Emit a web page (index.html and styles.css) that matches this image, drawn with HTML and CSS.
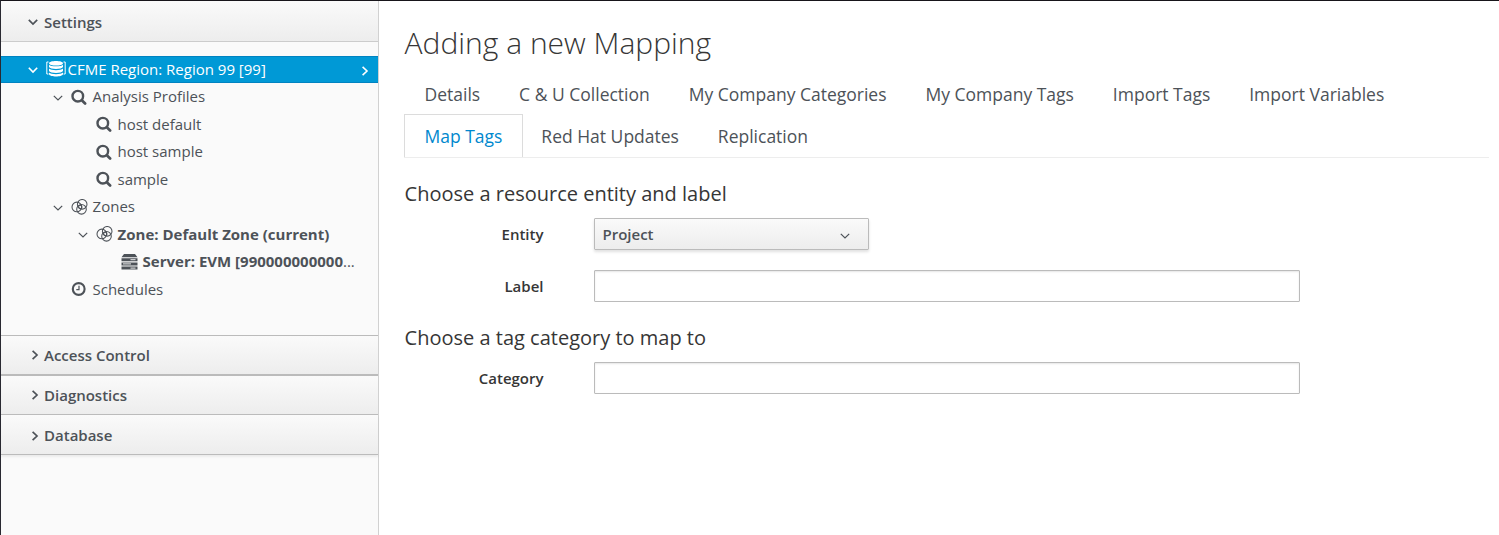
FILE: index.html
```html
<!DOCTYPE html>
<html lang="en">
<head>
<meta charset="utf-8">
<title>Adding a new Mapping</title>
<link rel="stylesheet" href="styles.css">
</head>
<body>
<svg class="defs" width="0" height="0">
  <symbol id="down" viewBox="0 0 10 10"><path d="M.8 2.800 5 7l4.200-4.200" fill="none" stroke="currentColor"/></symbol>
  <symbol id="right" viewBox="0 0 10 10"><path d="M2.600.8 7 5 2.600 9.200" fill="none" stroke="currentColor"/></symbol>
  <symbol id="search" viewBox="0 0 16 16"><circle cx="6.800" cy="7.200" r="5.300" fill="none" stroke="currentColor" stroke-width="2.400"/><path d="m10.800 11.200 3.300 3.300" stroke="currentColor" stroke-width="2.700" stroke-linecap="round"/></symbol>
  <symbol id="zone" viewBox="0 0 16 16"><g fill="none" stroke="currentColor" stroke-width="1.050"><circle cx="5.300" cy="7.900" r="4.800"/><circle cx="10.700" cy="5.300" r="4.800"/><circle cx="10" cy="10.300" r="4.800"/><circle cx="8.800" cy="8" r="1.700"/></g></symbol>
  <symbol id="server" viewBox="0 0 16 16"><path d="M2.500 0h11L16 3.300H0zM0 4.200h16v3H0zM0 8.400h16v3H0zM0 12.600h16v3H0z" fill="currentColor"/><path d="M9 5.700h5M1.500 9.900h8M9 14.100h5" stroke="#fafafa" stroke-width=".9"/></symbol>
  <symbol id="clock" viewBox="0 0 16 16"><circle cx="7.700" cy="8" r="5.900" fill="none" stroke="currentColor" stroke-width="2.100"/><path d="M8 4.700v4H5.300" fill="none" stroke="currentColor" stroke-width="1.200"/></symbol>
  <symbol id="region" viewBox="0 0 20 17"><g fill="currentColor"><path d="M3 3.200C3 .1 17 .1 17 3.200S3 6.300 3 3.200z"/><path d="M3 4.700c2 2.200 12 2.200 14 0v2.400c-1 2.600-13 2.600-14 0z"/><path d="M3 8.600c2 2.200 12 2.200 14 0V11c-1 2.600-13 2.600-14 0z"/><path d="M3 12.500c2 2.200 12 2.200 14 0v1.800c-1 3-13 3-14 0z"/></g><path d="M2.500 2H.8v12h1.700M17.500 2h1.700v12h-1.700" fill="none" stroke="currentColor"/></symbol>
</svg>
<div class="page">
  <aside class="sidebar">
    <div class="panel-head open"><svg class="chev"><use href="#down"/></svg><span>Settings</span></div>
    <ul class="tree">
      <li class="row selected"><svg class="chev"><use href="#down"/></svg><svg class="region"><use href="#region"/></svg><span>CFME Region: Region 99 [99]</span><svg class="chev more"><use href="#right"/></svg></li>
      <li class="row l2"><svg class="chev"><use href="#down"/></svg><svg class="icon"><use href="#search"/></svg><span>Analysis Profiles</span></li>
      <li class="row l3"><svg class="icon"><use href="#search"/></svg><span>host default</span></li>
      <li class="row l3"><svg class="icon"><use href="#search"/></svg><span>host sample</span></li>
      <li class="row l3"><svg class="icon"><use href="#search"/></svg><span>sample</span></li>
      <li class="row l2"><svg class="chev"><use href="#down"/></svg><svg class="icon wide"><use href="#zone"/></svg><span>Zones</span></li>
      <li class="row l3 current"><svg class="chev"><use href="#down"/></svg><svg class="icon wide"><use href="#zone"/></svg><span>Zone: Default Zone (current)</span></li>
      <li class="row l4 current"><svg class="icon wide"><use href="#server"/></svg><span>Server: EVM [990000000000<span class="dots">...</span></span></li>
      <li class="row l2"><svg class="icon"><use href="#clock"/></svg><span>Schedules</span></li>
    </ul>
    <div class="panel-head access"><svg class="chev"><use href="#right"/></svg><span>Access Control</span></div>
    <div class="panel-head diagnostics"><svg class="chev"><use href="#right"/></svg><span>Diagnostics</span></div>
    <div class="panel-head database"><svg class="chev"><use href="#right"/></svg><span>Database</span></div>
  </aside>
  <main class="main">
    <h1>Adding a new Mapping</h1>
    <nav class="tabs">
      <a>Details</a><a>C &amp; U Collection</a><a>My Company Categories</a><a>My Company Tags</a><a>Import Tags</a><a>Import Variables</a>
      <a class="active">Map Tags</a><a>Red Hat Updates</a><a>Replication</a>
    </nav>
    <h3>Choose a resource entity and label</h3>
    <div class="field"><label>Entity</label><button class="select"><span>Project</span><svg class="chev"><use href="#down"/></svg></button></div>
    <div class="field label-field"><label for="label">Label</label><input id="label" type="text"></div>
    <h3 class="second">Choose a tag category to map to</h3>
    <div class="field"><label for="category">Category</label><input id="category" type="text"></div>
  </main>
</div>
</body>
</html>
```
FILE: styles.css
```css
* { box-sizing: border-box; }
body { margin: 0; background: #fff; color: #363636; font: 15px/25px "Open Sans", sans-serif; overflow: hidden; }
svg { display: block; flex: none; }
.defs { position: absolute; }
.page { display: flex; height: 535px; border-top: 1px solid #17151a; border-left: 1px solid #292931; }
.sidebar { width: 378px; flex: none; background: #fafafa; border-right: 1px solid #d1d1d1; color: #4d5258; }
.panel-head { display: flex; align-items: center; height: 40px; padding-left: 27px; gap: 6px; border-bottom: 1px solid #bbb; background: linear-gradient(#fafafa, #ededed); font-weight: 600; }
.panel-head.open { height: 41px; padding-top: 2px; border-bottom-color: #ccc; }
.panel-head .chev { stroke-width: 1.7; }
.panel-head:not(.open) { padding-left: 29px; gap: 4px; }
.panel-head.access { border-top: 1px solid #bbb; border-bottom-width: 2px; height: 41px; }
.panel-head.diagnostics { height: 39px; }
.panel-head.database { padding-top: 2px; box-shadow: 0 2px 2px rgba(0,0,0,.06); }
.chev { width: 10px; height: 10px; stroke-width: 1.2; }
.tree { list-style: none; margin: 0; padding: 14px 0 0; height: 293px; }
.row { display: flex; align-items: center; height: 27.500px; white-space: nowrap; }
.selected { height: 27px; padding-left: 27px; background: #0099d6; border-top: 1px solid #0083c1; border-bottom: 1px solid #0083c1; color: #fff; }
.selected .chev { stroke-width: 1.6; }
.region { width: 20px; height: 17px; margin: -2px 1.500px 0 8px; }
.more { margin: 2px 8px 0 auto; }
.icon { width: 16px; height: 16px; margin-right: 5.500px; }
.icon.wide { width: 17px; margin-right: 4.600px; }
.l2 { padding-left: 70px; }
.l3 { padding-left: 95px; }
.l4 { padding-left: 120px; }
.row.l2 > .chev, .row.l3 > .chev { margin: 2px 8px 0 -18px; }
.current { font-weight: 700; }
.dots { font-weight: 400; }
.main { width: 1110px; padding: 21px 0 0 25px; }
h1, h3 { margin: 0 0 0 .6px; font-weight: 300; }
h1 { font-size: 30px; line-height: 41px; }
.tabs { display: flex; flex-wrap: wrap; margin-top: 10px; width: 1085px; border-bottom: 1px solid #ededed; font-size: 17.500px; line-height: 25px; color: #4d5258; }
.tabs a { height: 42px; margin-right: -2.100px; padding: 8px 19.500px 0; border: 1px solid transparent; border-bottom: 0; }
.tabs .active { height: 43px; margin: -1px -2.100px -1px 0; padding-top: 9px; border-color: #dcdcdc; background: #fff; color: #0088ce; }
h3 { margin-top: 22px; font-size: 20px; line-height: 28px; font-weight: 400; }
.field { display: flex; align-items: center; height: 32px; margin-top: 10px; }
.field label { width: 139.500px; margin-right: 50.500px; text-align: right; font-weight: 600; }
.field input { width: 706px; height: 32px; padding: 2px 8px; border: 1px solid #bbb; border-radius: 1px; box-shadow: inset 0 1px 2px rgba(0,0,0,.1); outline: 0; }
.label-field { margin-top: 20px; }
.second { margin-top: 22px; }
.select { display: flex; align-items: center; justify-content: space-between; width: 275px; height: 32px; padding: 0 18px 0 7.500px; border: 1px solid #bbb; border-radius: 1px; background: linear-gradient(#fafafa, #ededed); box-shadow: 0 2px 3px rgba(0,0,0,.12); color: #4d5258; font: 600 15px "Open Sans", sans-serif; }
.select .chev { margin-top: 3px; }
```
